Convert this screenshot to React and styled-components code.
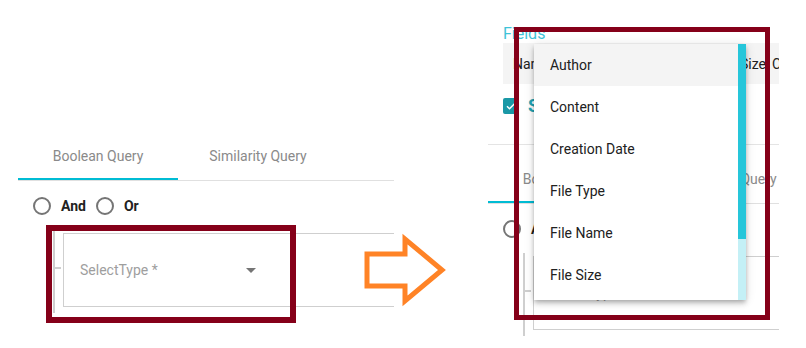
import React from "react";
import styled, { createGlobalStyle } from "styled-components";

const GlobalStyle = createGlobalStyle`
  html, body { margin: 0; padding: 0; background: #fff; }
  body { font-family: Roboto, "Liberation Sans", Arial, sans-serif; }
`;

const Page = styled.div`
  position: relative;
  width: 806px;
  height: 348px;
  display: flex;
  overflow: hidden;
  background: #fff;
`;

const Column = styled.div`
  width: ${(p) => p.$width}px;
  margin-left: ${(p) => p.$left}px;
  padding-top: ${(p) => p.$top}px;
  overflow: hidden;
  flex-shrink: 0;
`;

const FieldsTitle = styled.div`
  padding-left: 15px;
  height: 19px;
  font-size: 16px;
  line-height: 19px;
  color: #3fc3d8;
`;

const HeaderRow = styled.div`
  margin-left: 15px;
  height: 41px;
  background: #f4f4f4;
  display: flex;
  align-items: center;
  padding-left: 10px;
  font-size: 14px;
  color: #212121;
  white-space: nowrap;
  overflow: hidden;
`;

const HeaderCell = styled.span`
  flex: 0 0 ${(p) => p.$width}px;
`;

const CheckRow = styled.div`
  margin-top: 13px;
  padding-left: 15px;
  height: 17px;
  display: flex;
  align-items: center;
  gap: 9px;
`;

const CheckBox = styled.span`
  width: 16px;
  height: 16px;
  border-radius: 2px;
  background: #1a98a6;
  display: flex;
  align-items: center;
  justify-content: center;
`;

const CheckLabel = styled.span`
  font-size: 18px;
  font-weight: 700;
  color: #1fa3b3;
`;

const Divider = styled.div`
  margin-top: 30px;
  height: 1px;
  background: #e4e4e4;
`;

const Panel = styled.div`
  margin-top: ${(p) => p.$top || 0}px;
`;

const TabBar = styled.div`
  display: flex;
  border-bottom: 1px solid #e0e0e0;
  white-space: nowrap;
`;

const Tab = styled.div`
  flex: 0 0 160px;
  height: 48px;
  box-sizing: border-box;
  display: flex;
  align-items: center;
  justify-content: center;
  font-size: 14px;
  color: #8a8a8a;
  border-bottom: 2px solid ${(p) => (p.$active ? "#00bcd4" : "transparent")};
  padding-top: 2px;
`;

const RadioRow = styled.div`
  margin-top: 13px;
  height: 24px;
  padding-left: 15px;
  display: flex;
  align-items: center;
  gap: 10px;
`;

const Radio = styled.span`
  width: 18px;
  height: 18px;
  box-sizing: border-box;
  border: 2px solid #757575;
  border-radius: 50%;
`;

const RadioLabel = styled.span`
  font-size: 14px;
  font-weight: 700;
  color: #222;
`;

const Tree = styled.div`
  margin-left: 35px;
  margin-top: 12px;
  height: 83px;
  border-left: 2px solid #cfcfcf;
  display: flex;
  align-items: flex-start;
`;

const Tick = styled.span`
  flex: 0 0 6px;
  height: 2px;
  margin-top: 37px;
  background: #cfcfcf;
`;

const SelectBox = styled.div`
  margin-left: 2px;
  margin-top: 3px;
  height: 74px;
  flex: 0 0 420px;
  box-sizing: border-box;
  border: 1px solid #cfcfcf;
  border-right: none;
  display: flex;
  align-items: center;
`;

const SelectField = styled.div`
  width: 192px;
  box-sizing: border-box;
  padding-left: 16px;
  display: flex;
  align-items: center;
  justify-content: space-between;
`;

const Placeholder = styled.span`
  font-size: 14px;
  color: #9e9e9e;
`;

const Caret = styled.span`
  width: 0;
  height: 0;
  border-left: 5px solid transparent;
  border-right: 5px solid transparent;
  border-top: 5px solid #757575;
`;

const Menu = styled.div`
  position: absolute;
  left: 534px;
  top: 44px;
  width: 212px;
  height: 256px;
  background: #fff;
  display: flex;
  box-shadow: 0 2px 4px -1px rgba(0, 0, 0, 0.2), 0 4px 5px rgba(0, 0, 0, 0.14),
    0 1px 10px rgba(0, 0, 0, 0.12);
  overflow: hidden;
`;

const MenuList = styled.div`
  flex: 1;
`;

const MenuItem = styled.div`
  height: 42px;
  padding-left: 16px;
  display: flex;
  align-items: center;
  font-size: 14px;
  color: #212121;
  background: ${(p) => (p.$hover ? "#f4f4f4" : "#fff")};
`;

const ScrollTrack = styled.div`
  flex: 0 0 8px;
  background: #c4f0f6;
  display: flex;
  flex-direction: column;
`;

const ScrollThumb = styled.div`
  height: 195px;
  background: #26c6da;
`;

const Highlight = styled.div`
  position: absolute;
  left: ${(p) => p.$x}px;
  top: ${(p) => p.$y}px;
  width: ${(p) => p.$w}px;
  height: ${(p) => p.$h}px;
  box-sizing: border-box;
  border: ${(p) => p.$stroke}px solid #850019;
  pointer-events: none;
`;

const ArrowSvg = styled.svg`
  position: absolute;
  left: 360px;
  top: 230px;
`;

const items = ["Author", "Content", "Creation Date", "File Type", "File Name", "File Size"];

const QueryPanel = ({ top }) => (
  <Panel $top={top}>
    <TabBar>
      <Tab $active>Boolean Query</Tab>
      <Tab>Similarity Query</Tab>
    </TabBar>
    <RadioRow>
      <Radio />
      <RadioLabel>And</RadioLabel>
      <Radio />
      <RadioLabel>Or</RadioLabel>
    </RadioRow>
    <Tree>
      <Tick />
      <SelectBox>
        <SelectField>
          <Placeholder>SelectType *</Placeholder>
          <Caret />
        </SelectField>
      </SelectBox>
    </Tree>
  </Panel>
);

const App = () => (
  <>
    <GlobalStyle />
    <Page>
      <Column $width={376} $left={18} $top={132}>
        <QueryPanel />
      </Column>
      <Column $width={291} $left={94} $top={24}>
        <FieldsTitle>Fields</FieldsTitle>
        <HeaderRow>
          <HeaderCell $width={227}>Name</HeaderCell>
          <HeaderCell $width={32}>Size</HeaderCell>
          <HeaderCell $width={80}>Created</HeaderCell>
        </HeaderRow>
        <CheckRow>
          <CheckBox>
            <svg width="12" height="12" viewBox="0 0 24 24">
              <path d="M4 12.5l5 5L20 6.5" fill="none" stroke="#fff" strokeWidth="3" />
            </svg>
          </CheckBox>
          <CheckLabel>Select All</CheckLabel>
        </CheckRow>
        <Divider />
        <QueryPanel top={10} />
      </Column>

      <Menu>
        <MenuList>
          {items.map((it, i) => (
            <MenuItem key={it} $hover={i === 0}>
              {it}
            </MenuItem>
          ))}
        </MenuList>
        <ScrollTrack>
          <ScrollThumb />
        </ScrollTrack>
      </Menu>

      <Highlight $x={46} $y={225} $w={250} $h={98} $stroke={6} />
      <Highlight $x={514} $y={27} $w={256} $h={293} $stroke={5} />

      <ArrowSvg width="90" height="80" viewBox="360 230 90 80">
        <path
          d="M367 254 H405 V239 L442 270 L405 301 V286 H367 Z"
          fill="#fff"
          stroke="#ff8326"
          strokeWidth="5"
          strokeLinejoin="miter"
        />
      </ArrowSvg>
    </Page>
  </>
);

export default App;
